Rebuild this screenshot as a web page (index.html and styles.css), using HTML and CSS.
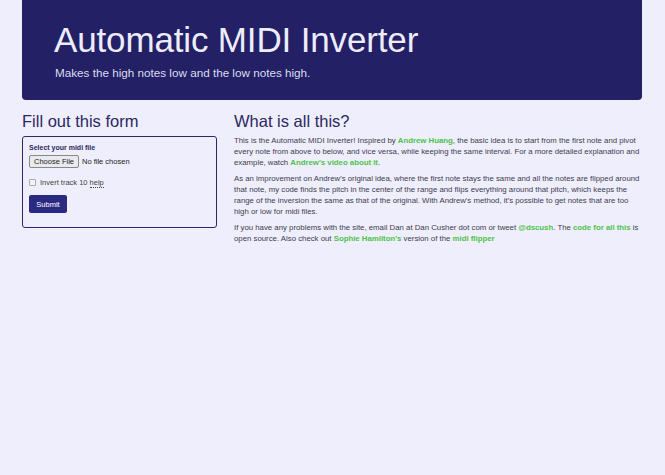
FILE: index.html
```html
<!DOCTYPE html>
<html>
<head>
<meta charset="utf-8">
<link rel="stylesheet" href="styles.css">
</head>
<body>
<div class="container">
  <header class="jumbotron">
    <h1>Automatic MIDI Inverter</h1>
    <p>Makes the high notes low and the low notes high.</p>
  </header>
  <div class="row">
    <div class="col-left">
      <h2>Fill out this form</h2>
      <form class="card">
        <label class="lbl">Select your midi file</label>
        <div class="file"><span class="filebtn">Choose File</span><span class="nofile">No file chosen</span></div>
        <div class="check"><span class="box"></span><span>Invert track 10 <abbr>help</abbr></span></div>
        <button type="button" class="submit">Submit</button>
      </form>
    </div>
    <div class="col-right">
      <h2>What is all this?</h2>
      <p>This is the Automatic MIDI Inverter! Inspired by <a>Andrew Huang</a>, the basic idea is to start from the first note and pivot every note from above to below, and vice versa, while keeping the same interval. For a more detailed explanation and example, watch <a>Andrew's video about it</a>.</p>
      <p>As an improvement on Andrew's original idea, where the first note stays the same and all the notes are flipped around that note, my code finds the pitch in the center of the range and flips everything around that pitch, which keeps the range of the inversion the same as that of the original. With Andrew's method, it's possible to get notes that are too high or low for midi files.</p>
      <p>If you have any problems with the site, email Dan at Dan Cusher dot com or tweet <a>@dscush</a>. The <a>code for all this</a> is open source. Also check out <a>Sophie Hamilton's</a> version of the <a>midi flipper</a></p>
    </div>
  </div>
</div>
</body>
</html>
```

FILE: styles.css
```css
html, body { margin: 0; padding: 0; }
body {
  background: #efeefc;
  font-family: "Liberation Sans", Arial, sans-serif;
  color: #333;
  width: 665px;
  height: 475px;
  overflow: hidden;
}
.container { padding: 0 22px 0 22px; width: 620px; }
.jumbotron {
  background: #232066;
  border-radius: 0 0 4px 4px;
  height: 100px;
  box-sizing: border-box;
  padding: 20px 32px 0 32px;
  color: #ededfa;
}
.jumbotron h1 {
  margin: 0;
  font-size: 35px;
  font-weight: normal;
  line-height: 40px;
  letter-spacing: -0.15px;
}
.jumbotron p {
  margin: 6px 0 0 1px;
  font-size: 11.7px;
  line-height: 14px;
  color: #dcdcf0;
}
.row { display: flex; gap: 17px; margin-top: 10px; }
.col-left { width: 195px; flex: none; }
.col-right { flex: 1; }
h2 {
  margin: 0;
  font-size: 16.5px;
  font-weight: normal;
  line-height: 22px;
  color: #2b2862;
}
.card {
  margin-top: 4px;
  border: 1.5px solid #2b2866;
  border-radius: 3px;
  height: 92px;
  box-sizing: border-box;
  padding: 6px 6px;
  font-size: 7.5px;
}
.lbl { display: block; font-weight: bold; color: #2b2862; font-size: 7px; line-height: 10px; }
.file { display: flex; align-items: center; margin-top: 2px; font-size: 7.5px; color: #222; }
.filebtn {
  border: 1px solid #888;
  background: #e9e9ee;
  border-radius: 2px;
  padding: 1px 4px;
  line-height: 9px;
  margin-right: 3px;
}
.check { display: flex; align-items: center; margin-top: 10px; font-size: 7.5px; color: #444; }
.box { width: 5px; height: 5px; border: 1px solid #aaa; border-radius: 1px; background: #f4f4f8; margin: 0 4px 0 0; }
abbr { border-bottom: 1px dotted #444; text-decoration: none; }
.submit {
  display: block;
  margin-top: 8px;
  background: #2a2a82;
  color: #fff;
  border: none;
  border-radius: 2px;
  font-family: inherit;
  font-size: 7.5px;
  width: 38px;
  padding: 0;
  height: 18px;
}
.col-right p {
  margin: 5px 0 0 0;
  font-size: 7.8px;
  line-height: 11px;
  color: #3c3c50;
}
.col-right h2 + p { margin-top: 3px; }
a { color: #4cc24c; font-weight: bold; }
```
